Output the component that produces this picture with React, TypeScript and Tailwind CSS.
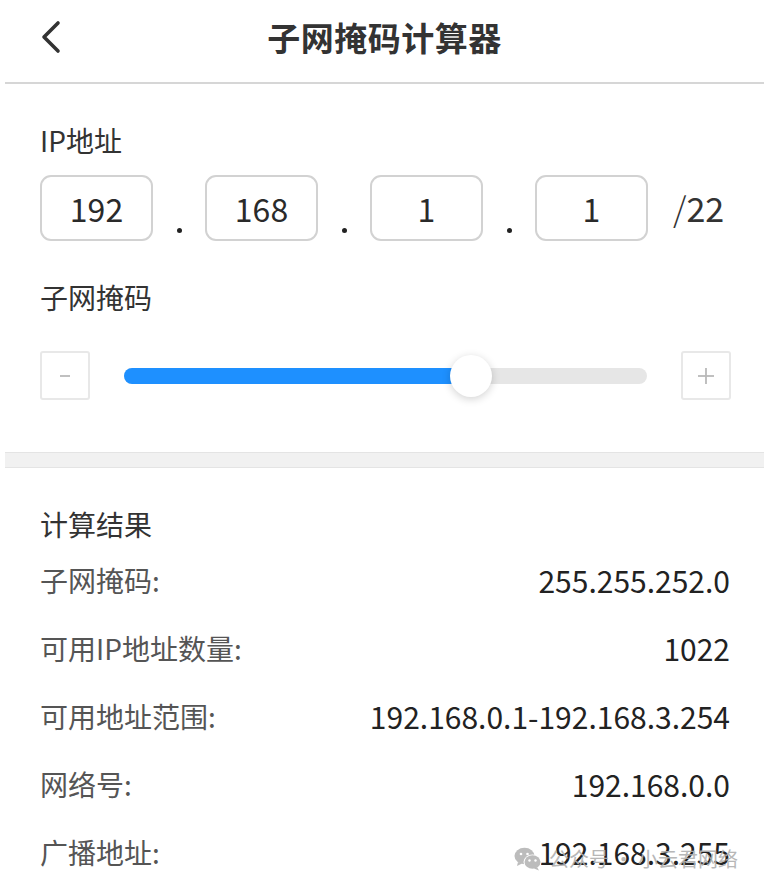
import React from "react";

const font = { fontFamily: '"Noto Sans CJK SC", "Noto Sans", sans-serif' };

function BackIcon() {
  return (
    <svg width="24" height="34" viewBox="0 0 24 34" fill="none">
      <polyline
        points="19,3 5,17 19,31"
        stroke="#333"
        strokeWidth="3.6"
        strokeLinecap="round"
        strokeLinejoin="round"
      />
    </svg>
  );
}

function OctetBox({ value }: { value: string }) {
  return (
    <div className="w-[113px] h-[66px] rounded-[11px] border-[2px] border-[#d2d2d2] flex items-center justify-center text-[32px] text-[#2a2a2a] leading-none">
      {value}
    </div>
  );
}

function Dot() {
  return (
    <div className="w-[52px] h-[66px] flex items-end justify-center pb-[8px]">
      <span className="block w-[5px] h-[5px] rounded-full bg-[#222]" />
    </div>
  );
}

function StepButton({ kind }: { kind: "minus" | "plus" }) {
  return (
    <button className="w-[50px] h-[49px] rounded-[3px] border-[2px] border-[#e8e8e8] bg-white flex items-center justify-center shrink-0">
      <svg width="22" height="22" viewBox="0 0 22 22">
        <line x1={kind === "minus" ? 6 : 3} y1="11" x2={kind === "minus" ? 16 : 19} y2="11" stroke="#b9b9b9" strokeWidth="1.8" />
        {kind === "plus" && <line x1="11" y1="3" x2="11" y2="19" stroke="#b9b9b9" strokeWidth="1.8" />}
      </svg>
    </button>
  );
}

function ResultRow({ label, value }: { label: string; value: string }) {
  return (
    <div className="h-[68px] flex items-center justify-between">
      <span className="text-[28px] text-[#555] leading-none">{label}</span>
      <span className="text-[30px] text-[#222] leading-none">{value}</span>
    </div>
  );
}

function WeChatMark() {
  return (
    <svg width="28" height="24" viewBox="0 0 28 24">
      <ellipse cx="10.5" cy="9" rx="10" ry="8.3" fill="#b5b5b5" />
      <path d="M4 15 L3 19 L8 16.5 Z" fill="#b5b5b5" />
      <circle cx="7" cy="7" r="1.3" fill="#fff" />
      <circle cx="13.5" cy="7" r="1.3" fill="#fff" />
      <ellipse cx="18.5" cy="15" rx="9" ry="7.5" fill="#fff" />
      <ellipse cx="18.5" cy="15" rx="8" ry="6.8" fill="#b5b5b5" />
      <path d="M23 20 L25 23.5 L20 21.5 Z" fill="#b5b5b5" />
      <circle cx="15.5" cy="13.5" r="1.2" fill="#fff" />
      <circle cx="21.5" cy="13.5" r="1.2" fill="#fff" />
    </svg>
  );
}

export default function App() {
  const fillPx = 347;
  return (
    <div className="w-[769px] h-[892px] bg-white overflow-hidden relative px-[5px]" style={font}>
      {/* header */}
      <header className="h-[84px] grid grid-cols-[1fr_auto_1fr] items-center border-b-[2px] border-[#d6d6d6] pb-[8px]">
        <div className="pl-[34px] flex items-center">
          <BackIcon />
        </div>
        <h1 className="text-[33px] font-bold text-[#333] leading-none tracking-[0.5px]">子网掩码计算器</h1>
        <div />
      </header>

      {/* input section */}
      <section className="pl-[35px] pr-[33px]">
        <div className="mt-[42px] text-[28px] leading-[28px] text-[#333]">IP地址</div>
        <div className="mt-[21px] flex items-center">
          <OctetBox value="192" />
          <Dot />
          <OctetBox value="168" />
          <Dot />
          <OctetBox value="1" />
          <Dot />
          <OctetBox value="1" />
          <span className="ml-[25px] text-[34px] leading-none text-[#333]">
            <span className="font-light">/</span>22
          </span>
        </div>

        <div className="mt-[42px] text-[28px] leading-[28px] text-[#333]">子网掩码</div>
        <div className="mt-[40px] mb-[52px] flex items-center">
          <StepButton kind="minus" />
          <div className="flex-1 mx-[34px] h-[16px] rounded-full bg-[#e6e6e6] relative">
            <div className="h-full rounded-full bg-[#1e90ff]" style={{ width: fillPx }} />
            <div
              className="absolute top-1/2 -translate-y-1/2 w-[42px] h-[42px] rounded-full bg-white shadow-[0_2px_8px_rgba(0,0,0,0.18)]"
              style={{ left: fillPx - 21 }}
            />
          </div>
          <StepButton kind="plus" />
        </div>
      </section>

      {/* divider band */}
      <div className="h-[16px] bg-[#f1f1f1] border-y border-[#e4e4e4]" />

      {/* results */}
      <section className="pl-[35px] pr-[34px]">
        <div className="mt-[42px] mb-[8px] text-[28px] leading-[28px] text-[#333]">计算结果</div>
        <ResultRow label="子网掩码:" value="255.255.252.0" />
        <ResultRow label="可用IP地址数量:" value="1022" />
        <ResultRow label="可用地址范围:" value="192.168.0.1-192.168.3.254" />
        <ResultRow label="网络号:" value="192.168.0.0" />
        <ResultRow label="广播地址:" value="192.168.3.255" />
      </section>

      {/* account watermark */}
      <div className="absolute left-[514px] top-[847px] flex items-center gap-[7px] opacity-90">
        <WeChatMark />
        <span className="text-[20px] leading-none text-[#b0b0b0] whitespace-nowrap">公众号 · 小云君网络</span>
      </div>
    </div>
  );
}
